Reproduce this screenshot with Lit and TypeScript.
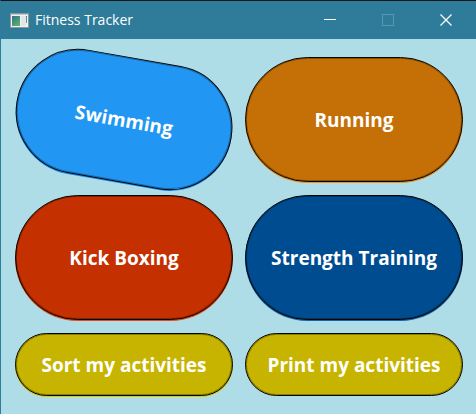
import { LitElement, html, css, svg } from "lit";
import { customElement, property } from "lit/decorators.js";

@customElement("activity-button")
class ActivityButton extends LitElement {
  @property() label = "";

  static styles = css`
    :host {
      display: grid;
      min-width: 0;
      padding-bottom: 1px;
    }
    .pill {
      min-width: 0;
      margin: 0;
      padding: 0;
      border: 1px solid #050505;
      border-radius: 64px;
      background: var(--fill);
      box-shadow:
        inset 0 0 0 1px rgb(0 0 0 / 30%),
        0 1px 0 var(--glow, transparent);
      color: #fff;
      font: 700 19px/28px "Open Sans", "Noto Sans", sans-serif;
      white-space: nowrap;
      cursor: pointer;
    }
  `;

  render() {
    return html`<button class="pill" type="button">${this.label}</button>`;
  }
}

@customElement("title-bar")
class TitleBar extends LitElement {
  @property() heading = "";

  static styles = css`
    :host {
      display: flex;
      align-items: center;
      height: 38px;
      padding: 0 1px 0 9px;
      background: #2e7c9a;
      color: #fff;
    }
    .app-icon {
      display: block;
      flex: none;
      margin-right: 6px;
    }
    .heading {
      flex: 1;
      margin: 0;
      font: 400 14px/20px "Open Sans", "Noto Sans", sans-serif;
      white-space: nowrap;
    }
    .control {
      display: grid;
      place-items: center;
      width: 58px;
      height: 38px;
      padding: 0;
      border: 0;
      background: none;
      color: #fff;
    }
    .control:disabled {
      color: #5899b0;
    }
  `;

  private control(label: string, glyph: unknown, disabled = false) {
    return html`<button class="control" type="button" aria-label=${label} ?disabled=${disabled}>
      <svg width="12" height="12" viewBox="0 0 12 12" fill="none" stroke="currentColor">${glyph}</svg>
    </button>`;
  }

  render() {
    return html`
      <svg class="app-icon" width="19" height="15" viewBox="0 0 19 15" aria-hidden="true">
        <defs>
          <linearGradient id="screen" x1="0" y1="0" x2="0.6" y2="1">
            <stop offset="0" stop-color="#34708f" />
            <stop offset="1" stop-color="#56b06c" />
          </linearGradient>
          <linearGradient id="strip" x1="0" y1="0" x2="0" y2="1">
            <stop offset="0" stop-color="#3f7fa0" />
            <stop offset="1" stop-color="#58b377" />
          </linearGradient>
        </defs>
        <rect x="0.5" y="0.5" width="18" height="14" fill="#f1f3f2" stroke="#8f979b" />
        <rect x="1" y="1" width="17" height="1" fill="#c3c8ca" />
        <rect x="2" y="3" width="8" height="10" fill="url(#screen)" />
        <rect x="11" y="3" width="5" height="10" fill="#e3e6e8" />
        <path d="M16 3h1v7h-1z" fill="url(#strip)" />
      </svg>
      <h1 class="heading">${this.heading}</h1>
      ${this.control("Minimize", svg`<path d="M0 5.5h12" />`)}
      ${this.control("Maximize", svg`<rect x="0.5" y="0.5" width="11" height="11" />`, true)}
      ${this.control("Close", svg`<path d="M0.5 0.5l11 11M11.5 0.5l-11 11" stroke-width="1.3" />`)}
    `;
  }
}

@customElement("app-root")
class AppRoot extends LitElement {
  static styles = css`
    :host {
      display: flex;
      flex-direction: column;
      box-sizing: border-box;
      min-height: 100vh;
      border-top: 1px solid #15181a;
      border-left: 1px solid #2e7c9a;
      background: #aedde7;
    }
    .activities {
      display: grid;
      grid-template-columns: 1fr 1fr;
      grid-template-rows: 126px 126px 64px;
      gap: 12px;
      padding: 18px 13px 17px 14px;
    }
    .swimming {
      --fill: #2196f3;
      --glow: #1e88f0;
      transform: rotate(10deg);
    }
    .running {
      --fill: #c47006;
      --glow: #e8922a;
    }
    .boxing {
      --fill: #c43000;
      --glow: #e04a1a;
    }
    .strength {
      --fill: #004c91;
      --glow: #1a62a6;
    }
    .sort {
      --fill: #c7b400;
      --glow: #d8c71c;
    }
    .print {
      --fill: #c7b400;
    }
  `;

  render() {
    return html`
      <title-bar heading="Fitness Tracker"></title-bar>
      <main class="activities">
        <activity-button class="swimming" label="Swimming"></activity-button>
        <activity-button class="running" label="Running"></activity-button>
        <activity-button class="boxing" label="Kick Boxing"></activity-button>
        <activity-button class="strength" label="Strength Training"></activity-button>
        <activity-button class="sort" label="Sort my activities"></activity-button>
        <activity-button class="print" label="Print my activities"></activity-button>
      </main>
    `;
  }
}
